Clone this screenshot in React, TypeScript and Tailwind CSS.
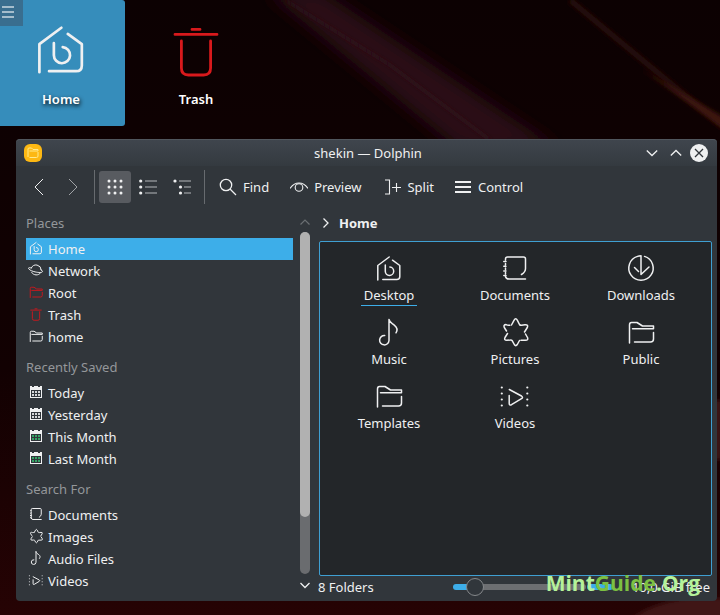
import React from "react";

type IconProps = { className?: string; weight?: number };

function Glyph({ className = "size-7", weight = 1.5, children }: IconProps & { children: React.ReactNode }) {
  return (
    <svg
      viewBox="0 0 28 28"
      className={`shrink-0 overflow-visible ${className}`}
      fill="none"
      stroke="currentColor"
      strokeWidth={weight}
      strokeLinecap="round"
      strokeLinejoin="round"
      aria-hidden="true"
    >
      {children}
    </svg>
  );
}

const HomeIcon = (p: IconProps) => (
  <Glyph {...p}>
    <path d="M2.8 26V11.500L14.200 3M17.500 6.200l7.300 5.300v11q0 3-3 3H7.800M10.300 11v6.200a4.200 4.200 0 1 0 4.600-4.200" />
  </Glyph>
);
const DocumentIcon = (p: IconProps) => (
  <Glyph {...p}>
    <path d="M4.500 6V5q0-2 2-2h16q2 0 2 2v9.500q0 3.500-4 6M24.500 25H8q-3 0-3.500-2.500M4.500 9.500v1.500M4.500 14v1.500M4.500 18.500v1.500M2.800 7.500h2.200M2.800 12.300h2.200M2.800 17h2.200M2.800 21.500h2.200" />
  </Glyph>
);
const DownloadIcon = (p: IconProps) => (
  <Glyph {...p}>
    <path d="M14 2v18.500l8-7.500M7.500 13.500l4 4M17.500 2.400a12.200 12.200 0 1 1-7 0M10.500 2.400Q12 1.800 14 1.800" />
  </Glyph>
);
const MusicIcon = (p: IconProps) => (
  <Glyph {...p}>
    <path d="M14 1.500V22.500a4.700 4.700 0 1 1-4.300-5M14 1.500c.8 3.600 3 3.800 5.500 5.800 3 2.400 3.500 4.300 1.500 7.500" />
  </Glyph>
);
const PictureIcon = (p: IconProps) => (
  <Glyph {...p}>
    <path d="M10.500 7 13 2.300Q14.700-.8 16.400 2.300L18.500 6.500q.6 1 2 .8l3.500-.6q3.500-.2 2.300 2.800L23.500 14M24.500 16l2 3.500q1 2.800-2 2.800H20M18.500 22.500l-2.200 4q-1.500 2.300-3 0l-2-3.700q-.7-1-2-.8l-3.500.3q-3 0-1.800-2.800L6.500 15.500M5.500 13 3.300 9.500Q2.200 6.600 5 6.600q2 1 3.800.6" />
  </Glyph>
);
const FolderIcon = (p: IconProps) => (
  <Glyph {...p}>
    <path d="M2.500 25V7q0-2.500 2-2.500h5.500l5.500 3.500h11v2.800H5.500M26.500 14.500v6.500q0 3-3 3H7.500" />
  </Glyph>
);
const VideoIcon = (p: IconProps) => (
  <Glyph {...p}>
    <path d="M8.300 7.500 20.500 14q2 1.500 0 2.700l-10 6q-2.300 1-2.300-1.200V13.500" />
    <path strokeWidth="2.200" d="M.8 5.500h.01M.8 11.500h.01M.8 17.500h.01M.8 23.500h.01M26.300 5.500h.01M26.300 11.500h.01M26.300 17.500h.01M26.300 23.500h.01" />
  </Glyph>
);
const TrashIcon = (p: IconProps) => (
  <Glyph {...p}>
    <path d="M3.500 6.200h21M12 3.700h4M6.700 9.500v13.500q0 3.500 3.500 3.500h7.600q3.500 0 3.500-3.500V9.500" />
  </Glyph>
);
const NetworkIcon = (p: IconProps) => (
  <Glyph {...p}>
    <path d="M4.500 10a10.500 10.500 0 0 1 20 4M5.500 19a10.500 10.500 0 0 0 17.500 1M4.500 10C-3 7-3 12 5 15.500s22 5 22 1.500q0-2-3-3.500" />
  </Glyph>
);

function CalendarIcon({ dots }: { dots: string }) {
  return (
    <svg viewBox="0 0 14 14" className="size-3.5 shrink-0" aria-hidden="true">
      <path fill="#eff0f1" fillRule="evenodd" d="M1 1h2v1h2V1h4v1h2V1h2v12H1ZM2 5v7h10V5Z" />
      <path
        fill={dots}
        d="M3 6h2v2H3zM6 6h2v2H6zM9 6h2v2H9zM3 9h2v2H3zM6 9h2v2H6zM9 9h2v2H9z"
      />
    </svg>
  );
}

const small = { className: "size-3.5", weight: 2 };
const sections = [
  {
    title: "Places",
    items: [
      { name: "Home", icon: <HomeIcon {...small} />, active: true },
      { name: "Network", icon: <NetworkIcon {...small} /> },
      { name: "Root", icon: <FolderIcon className="size-3.5 text-[#c4191f]" weight={2} /> },
      { name: "Trash", icon: <TrashIcon className="size-3.5 text-[#c4191f]" weight={2} /> },
      { name: "home", icon: <FolderIcon {...small} /> },
    ],
  },
  {
    title: "Recently Saved",
    items: [
      { name: "Today", icon: <CalendarIcon dots="#d5d7d9" /> },
      { name: "Yesterday", icon: <CalendarIcon dots="#d5d7d9" /> },
      { name: "This Month", icon: <CalendarIcon dots="#35a566" /> },
      { name: "Last Month", icon: <CalendarIcon dots="#35a566" /> },
    ],
  },
  {
    title: "Search For",
    items: [
      { name: "Documents", icon: <DocumentIcon {...small} /> },
      { name: "Images", icon: <PictureIcon {...small} /> },
      { name: "Audio Files", icon: <MusicIcon {...small} /> },
      { name: "Videos", icon: <VideoIcon {...small} /> },
    ],
  },
];

const folders = [
  { name: "Desktop", icon: <HomeIcon />, current: true },
  { name: "Documents", icon: <DocumentIcon /> },
  { name: "Downloads", icon: <DownloadIcon /> },
  { name: "Music", icon: <MusicIcon /> },
  { name: "Pictures", icon: <PictureIcon /> },
  { name: "Public", icon: <FolderIcon /> },
  { name: "Templates", icon: <FolderIcon /> },
  { name: "Videos", icon: <VideoIcon /> },
];

function Wallpaper() {
  return (
    <svg
      className="absolute inset-0 -z-10 size-full"
      viewBox="0 0 720 615"
      preserveAspectRatio="none"
      aria-hidden="true"
    >
      <defs>
        <filter id="soft" x="-20%" y="-20%" width="140%" height="140%">
          <feGaussianBlur stdDeviation="9" />
        </filter>
        <filter id="fine" x="-20%" y="-20%" width="140%" height="140%">
          <feGaussianBlur stdDeviation="2" />
        </filter>
        <linearGradient id="base" x1="0" y1="0" x2="0" y2="1">
          <stop offset="0" stopColor="#0c0102" />
          <stop offset=".6" stopColor="#120102" />
          <stop offset="1" stopColor="#260304" />
        </linearGradient>
      </defs>
      <rect width="720" height="615" fill="url(#base)" />
      <path d="M265-10 320-10 560 150 460 150Z" fill="#2a0f16" filter="url(#soft)" />
      <path d="M285 0 390 65 490 140" stroke="#32161a" strokeWidth="2" fill="none" filter="url(#fine)" />
      <path d="M570 0Q630 50 725 128" stroke="#260907" strokeWidth="6" fill="none" filter="url(#fine)" />
      <path d="M640 68 725 118v12Z" fill="#3c1811" filter="url(#fine)" />
      <path d="M630 620Q650 603 690 598H725V620Z" fill="#3f1615" filter="url(#fine)" />
      <path d="M714 400h8v60h-8z" fill="#3d1216" filter="url(#fine)" />
    </svg>
  );
}

const textButton = "flex h-8 items-center";

export default function App() {
  return (
    <div className="relative isolate flex min-h-screen flex-col overflow-hidden bg-black font-['Noto_Sans','Open_Sans',sans-serif] text-[13px] leading-[18px] text-[#eff0f1]">
      <Wallpaper />

      <div className="flex">
        <a
          href="#home"
          className="relative flex h-[126px] w-[125px] flex-col items-center rounded-br-[3px] rounded-tr-[3px] bg-[#368dbb] pr-[3px] pt-[22px]"
        >
          <span className="absolute left-0 top-0 flex h-[26px] w-[23px] flex-col gap-[3px] bg-[#396e8f] pl-0.5 pt-1.5">
            <span className="h-0.5 w-3 bg-[#a5bdcc]" />
            <span className="h-0.5 w-3 bg-[#a5bdcc]" />
            <span className="h-0.5 w-3 bg-[#a5bdcc]" />
          </span>
          <HomeIcon className="size-[54px]" weight={1.4} />
          <span className="mt-3.5 font-semibold text-white [text-shadow:1px_2px_4px_#000]">Home</span>
        </a>
        <a href="#trash" className="ml-2 flex w-[126px] flex-col items-center pt-[22px]">
          <TrashIcon className="size-14 text-[#d8191c]" weight={1.4} />
          <span className="mt-3 font-semibold text-white">Trash</span>
        </a>
      </div>

      <main className="mb-3.5 ml-4 mr-[3px] mt-[13px] flex flex-1 flex-col rounded bg-[#31363b]">
        <header className="flex h-[27px] items-center rounded-t border-t border-[#50565d] bg-linear-to-b from-[#3f454d] to-[#343a40] px-2">
          <svg viewBox="0 0 18 18" className="size-[18px]" aria-hidden="true">
            <rect width="18" height="18" rx="6" fill="#fdb813" />
            <path
              d="M4 13V5q0-1 1-1h2.500l1.500 1.500h5V7H5.500M14 8v4q0 1.500-1.500 1.500H5.500"
              fill="none"
              stroke="#ffe98c"
              strokeWidth="1"
            />
          </svg>
          <h1 className="flex-1 pl-12 text-center">shekin — Dolphin</h1>
          <div className="flex items-center gap-3">
            <button aria-label="Minimize">
              <svg viewBox="0 0 12 12" className="size-3" fill="none" stroke="currentColor" strokeWidth="1.300">
                <path d="m.8 3.500 5.200 5 5.200-5" />
              </svg>
            </button>
            <button aria-label="Maximize">
              <svg viewBox="0 0 12 12" className="size-3" fill="none" stroke="currentColor" strokeWidth="1.300">
                <path d="m.8 8.500 5.200-5 5.200 5" />
              </svg>
            </button>
            <button aria-label="Close" className="-ml-1 pr-px">
              <svg viewBox="0 0 18 18" className="size-[18px]">
                <circle cx="9" cy="9" r="9" fill="#eff0f1" />
                <path d="m5 5 8 8M13 5l-8 8" stroke="#31363b" strokeWidth="1.300" />
              </svg>
            </button>
          </div>
        </header>

        <nav aria-label="Toolbar" className="flex items-center pl-[7px] pt-1">
          <button aria-label="Back" className="flex size-8 items-center justify-center">
            <svg viewBox="0 0 16 18" className="h-[18px] w-4" fill="none" stroke="currentColor" strokeWidth="1">
              <path d="M12 1 4 9l8 8" />
            </svg>
          </button>
          <button aria-label="Forward" className="ml-0.5 flex size-8 items-center justify-center text-[#a0a3a6]">
            <svg viewBox="0 0 16 18" className="h-[18px] w-4" fill="none" stroke="currentColor" strokeWidth="1">
              <path d="m4 1 8 8-8 8" />
            </svg>
          </button>
          <span className="ml-[5px] h-[34px] w-px bg-[#676b6f]" />
          <button aria-label="Icons view" aria-pressed="true" className="ml-1 flex size-8 items-center justify-center rounded-[3px] bg-[#585b60]">
            <svg viewBox="0 0 16 16" className="size-4" fill="currentColor">
              {[2, 8, 14].map((y) => [2, 8, 14].map((x) => <circle key={`${x}-${y}`} cx={x} cy={y} r="1.500" />))}
            </svg>
          </button>
          <button aria-label="Compact view" className="ml-px flex size-8 items-center justify-center">
            <svg viewBox="0 0 18 16" className="h-4 w-[18px]" fill="currentColor">
              {[2, 8, 14].map((y) => (
                <g key={y}>
                  <circle cx="1.700" cy={y} r="1.600" />
                  <rect x="6" y={y - 0.5} width="12" height="1" opacity=".7" />
                </g>
              ))}
            </svg>
          </button>
          <button aria-label="Details view" className="ml-0.5 flex size-8 items-center justify-center">
            <svg viewBox="0 0 18 16" className="h-4 w-[18px]" fill="currentColor">
              <circle cx="2" cy="2" r="1.600" />
              <circle cx="7.500" cy="8" r="1.600" />
              <circle cx="7.500" cy="14" r="1.600" />
              <path opacity=".7" d="M6 1.500h12v1H6zM11 7.500h7v1h-7zM11 13.500h7v1h-7z" />
            </svg>
          </button>
          <span className="ml-1.5 h-[34px] w-px bg-[#676b6f]" />
          <button className={`${textButton} ml-[14px] gap-1.5`}>
            <svg viewBox="0 0 18 18" className="size-[18px]" fill="none" stroke="currentColor" strokeWidth="1.300">
              <circle cx="7" cy="7" r="5.700" />
              <path d="m11 11 6 6" />
            </svg>
            Find
          </button>
          <button className={`${textButton} ml-[21px] gap-1.5`}>
            <svg viewBox="0 0 18 18" className="size-[18px]" fill="none" stroke="currentColor" strokeWidth="1.100">
              <path d="M0 10.500C5 3.200 13 3.200 18 10.500" />
              <circle cx="9" cy="9.500" r="3.800" />
            </svg>
            Preview
          </button>
          <button className={`${textButton} ml-6 gap-1.5`}>
            <svg viewBox="0 0 16 18" className="h-[18px] w-4" fill="none" stroke="currentColor" strokeWidth="1.100">
              <path d="M0 2h4.500v14H0M7 9.500h9M11.500 5v9" />
            </svg>
            Split
          </button>
          <button className={`${textButton} ml-[21px] gap-[7px]`}>
            <span className="flex w-4 flex-col gap-[3px]">
              <span className="h-0.5 bg-current" />
              <span className="h-0.5 bg-current" />
              <span className="h-0.5 bg-current" />
            </span>
            Control
          </button>
        </nav>

        <div className="flex flex-1 pb-[9px] pl-2.5 pr-[5px] pt-2">
          <aside className="w-[267px] shrink-0" aria-label="Places">
            {sections.map((section) => (
              <section key={section.title} className="mb-2 last:mb-0">
                <h2 className="mb-1 leading-[22px] text-[#94979a]">{section.title}</h2>
                <ul>
                  {section.items.map((item) => (
                    <li key={item.name}>
                      <a
                        href={`#${item.name}`}
                        className={`flex h-[22px] items-center gap-[5px] pl-[3px] [&>svg]:mb-0.5 ${"active" in item && item.active ? "bg-[#3daee9]" : ""}`}
                      >
                        {item.icon}
                        {item.name}
                      </a>
                    </li>
                  ))}
                </ul>
              </section>
            ))}
          </aside>

          <div className="ml-[7px] flex w-2.5 shrink-0 flex-col items-center">
            <svg viewBox="0 0 10 20" className="h-5 w-2.5" fill="none" stroke="#6b6f73" strokeWidth="1.200">
              <path d="m.5 12.500 4.500-4.500 4.500 4.500" />
            </svg>
            <div className="flex w-full flex-1 flex-col rounded-full bg-[#6a6c6f]">
              <div className="h-5/6 w-full rounded-full bg-[#b1b1b1]" />
            </div>
            <svg viewBox="0 0 10 18" className="h-[18px] w-2.5" fill="none" stroke="currentColor" strokeWidth="1.300">
              <path d="m.5 9 4.500 4.500L9.500 9" />
            </svg>
          </div>

          <div className="ml-[9px] flex min-w-0 flex-1 flex-col">
            <div className="flex h-[22px] items-center gap-2.5 pl-1">
              <svg viewBox="0 0 6 10" className="h-2.5 w-1.5 overflow-visible" fill="none" stroke="currentColor" strokeWidth="1.300">
                <path d="m.5.5 4.500 4.500-4.500 4.500" />
              </svg>
              <a href="#home" className="font-bold">Home</a>
            </div>
            <ul className="mt-[7px] grid flex-1 grid-cols-[repeat(auto-fill,126px)] content-start rounded-[2px] border border-[#3f9fd2] bg-[#232629] pl-1.5 pt-3">
              {folders.map((folder) => (
                <li key={folder.name}>
                  <a href={`#${folder.name}`} className="flex h-16 flex-col items-center">
                    {folder.icon}
                    <span
                      className={`mt-1 border-b px-[3px] pb-px ${"current" in folder && folder.current ? "border-[#3daee9]" : "border-transparent"}`}
                    >
                      {folder.name}
                    </span>
                  </a>
                </li>
              ))}
            </ul>
            <footer className="-ml-px -mb-1.5 flex h-[22px] items-center">
              <span className="flex-1">8 Folders</span>
              <input
                type="range"
                aria-label="Icon size"
                min={0}
                max={100}
                defaultValue={11}
                className="h-[18px] w-[133px] appearance-none bg-transparent [&::-webkit-slider-runnable-track]:h-1.5 [&::-webkit-slider-runnable-track]:rounded-full [&::-webkit-slider-runnable-track]:bg-[linear-gradient(90deg,#3daee9_16%,#6d6f72_16%)] [&::-webkit-slider-thumb]:-mt-1.5 [&::-webkit-slider-thumb]:size-[18px] [&::-webkit-slider-thumb]:appearance-none [&::-webkit-slider-thumb]:rounded-full [&::-webkit-slider-thumb]:border [&::-webkit-slider-thumb]:border-[#85888b] [&::-webkit-slider-thumb]:bg-[#31363b]"
              />
              <div className="relative ml-px flex w-[125px] items-center justify-end pr-0.5">
                <span className="absolute left-0 top-1.5 h-1.5 w-[26px] rounded-full bg-[#3daee9]" />
                <span>10,0 GiB free</span>
                <span className="absolute -top-2.5 right-3 whitespace-nowrap font-['Open_Sans',sans-serif] text-[21px] font-bold leading-[30px] text-[#b5f29a]">
                  Mint<span className="text-[#7cc142]">Guide</span>.Org
                </span>
              </div>
            </footer>
          </div>
        </div>
      </main>
    </div>
  );
}
